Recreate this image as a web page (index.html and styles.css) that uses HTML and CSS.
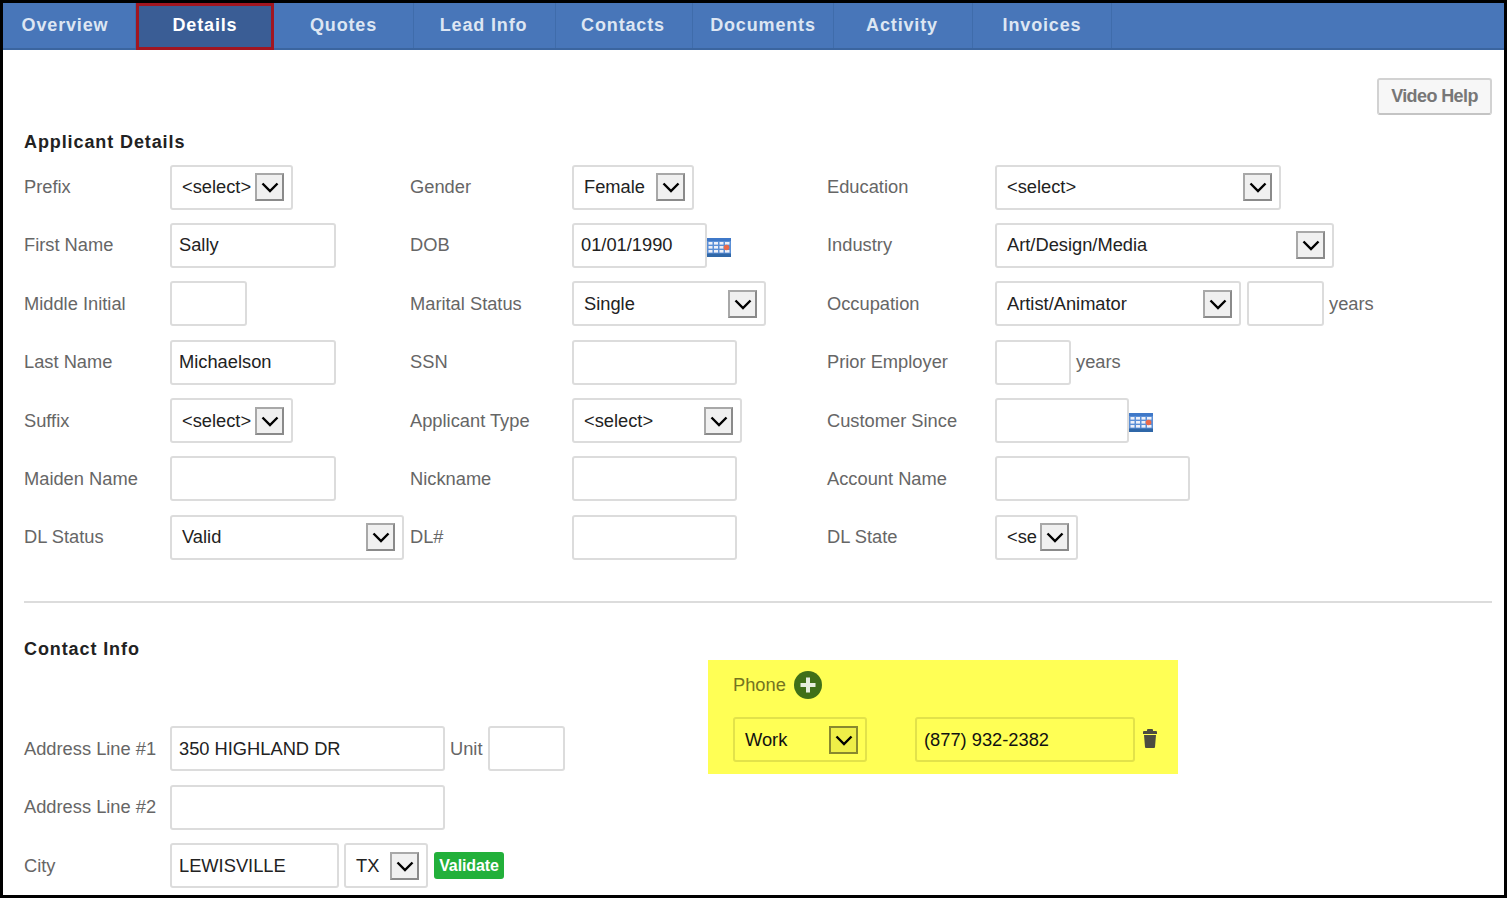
FILE: index.html
```html
<!doctype html>
<html>
<head>
    <title>Lead Details</title>
    <meta name="viewport" content="width=device-width, initial-scale=1.0">
    <link rel="stylesheet" href="styles.css">
</head>
<body>
    <svg class="defs" width="0" height="0">
        <symbol id="chev" viewBox="0 0 18 18"><path d="M1.5 5.5l7.5 7.5 7.5-7.5" fill="none" stroke="#000" stroke-width="2.4"/></symbol>
        <symbol id="cal" viewBox="0 0 24 19">
            <rect width="24" height="19" fill="#5b8fd6"/>
            <rect width="24" height="3" fill="#3f78c8"/>
            <rect y="15.5" width="24" height="3.5" fill="#2f67a8"/>
            <g fill="#eef0f8">
                <rect x="1.5" y="4" width="4" height="2.6"/><rect x="7" y="4" width="4" height="2.6"/><rect x="12.5" y="4" width="4" height="2.6"/><rect x="18" y="4" width="4.5" height="2.6"/>
                <rect x="1.5" y="8" width="4" height="2.6"/><rect x="7" y="8" width="4" height="2.6"/><rect x="12.5" y="8" width="4" height="2.6"/>
                <rect x="1.5" y="12" width="4" height="2.6"/><rect x="7" y="12" width="4" height="2.6"/><rect x="12.5" y="12" width="4" height="2.6"/><rect x="18" y="12" width="4.5" height="2.6"/>
            </g>
            <circle cx="19.5" cy="9.5" r="2.8" fill="#ec6a4a"/>
        </symbol>
    </svg>

    <div class="frame">
        <nav class="tabs">
            <a class="tab tab-overview">Overview</a>
            <a class="tab tab-details active">Details</a>
            <a class="tab tab-quotes">Quotes</a>
            <a class="tab tab-lead">Lead Info</a>
            <a class="tab tab-contacts">Contacts</a>
            <a class="tab tab-documents">Documents</a>
            <a class="tab tab-activity">Activity</a>
            <a class="tab tab-invoices">Invoices</a>
        </nav>

        <div class="content">
            <div class="help-row"><button class="video-help">Video Help</button></div>

            <h3 class="section-title">Applicant Details</h3>
            <div class="details-grid">
                <label>Prefix</label>
                <div class="cell"><div class="select w123"><span>&lt;select&gt;</span><i class="arrow"><svg><use href="#chev"/></svg></i></div></div>
                <label>Gender</label>
                <div class="cell"><div class="select w122"><span>Female</span><i class="arrow"><svg><use href="#chev"/></svg></i></div></div>
                <label>Education</label>
                <div class="cell"><div class="select w286"><span>&lt;select&gt;</span><i class="arrow"><svg><use href="#chev"/></svg></i></div></div>

                <label>First Name</label>
                <div class="cell"><input class="w166" type="text" value="Sally"></div>
                <label>DOB</label>
                <div class="cell"><input class="w135" type="text" value="01/01/1990"><svg class="cal"><use href="#cal"/></svg></div>
                <label>Industry</label>
                <div class="cell"><div class="select w339"><span>Art/Design/Media</span><i class="arrow"><svg><use href="#chev"/></svg></i></div></div>

                <label>Middle Initial</label>
                <div class="cell"><input class="w77" type="text"></div>
                <label>Marital Status</label>
                <div class="cell"><div class="select w194"><span>Single</span><i class="arrow"><svg><use href="#chev"/></svg></i></div></div>
                <label>Occupation</label>
                <div class="cell"><div class="select w246"><span>Artist/Animator</span><i class="arrow"><svg><use href="#chev"/></svg></i></div><input class="w77 next" type="text"><label class="unit">years</label></div>

                <label>Last Name</label>
                <div class="cell"><input class="w166" type="text" value="Michaelson"></div>
                <label>SSN</label>
                <div class="cell"><input class="w165" type="text"></div>
                <label>Prior Employer</label>
                <div class="cell"><input class="w76" type="text"><label class="unit">years</label></div>

                <label>Suffix</label>
                <div class="cell"><div class="select w123"><span>&lt;select&gt;</span><i class="arrow"><svg><use href="#chev"/></svg></i></div></div>
                <label>Applicant Type</label>
                <div class="cell"><div class="select w170"><span>&lt;select&gt;</span><i class="arrow"><svg><use href="#chev"/></svg></i></div></div>
                <label>Customer Since</label>
                <div class="cell"><input class="w134" type="text"><svg class="cal"><use href="#cal"/></svg></div>

                <label>Maiden Name</label>
                <div class="cell"><input class="w166" type="text"></div>
                <label>Nickname</label>
                <div class="cell"><input class="w165" type="text"></div>
                <label>Account Name</label>
                <div class="cell"><input class="w195" type="text"></div>

                <label>DL Status</label>
                <div class="cell"><div class="select w234"><span>Valid</span><i class="arrow"><svg><use href="#chev"/></svg></i></div></div>
                <label>DL#</label>
                <div class="cell"><input class="w165" type="text"></div>
                <label>DL State</label>
                <div class="cell"><div class="select w83"><span>&lt;se</span><i class="arrow"><svg><use href="#chev"/></svg></i></div></div>
            </div>

            <hr class="divider">

            <div class="contact">
                <div class="contact-left">
                    <h3 class="section-title">Contact Info</h3>
                    <div class="address-rows">
                        <div class="address-row">
                            <label>Address Line #1</label>
                            <input class="w275" type="text" value="350 HIGHLAND DR">
                            <label class="unit">Unit</label>
                            <input class="w77 unit-input" type="text">
                        </div>
                        <div class="address-row">
                            <label>Address Line #2</label>
                            <input class="w275" type="text">
                        </div>
                        <div class="address-row">
                            <label>City</label>
                            <input class="w169" type="text" value="LEWISVILLE">
                            <div class="select w84 state"><span>TX</span><i class="arrow"><svg><use href="#chev"/></svg></i></div>
                            <button class="validate">Validate</button>
                        </div>
                    </div>
                </div>

                <div class="phone-panel">
                    <div class="phone-head">
                        <label>Phone</label>
                        <svg class="add" viewBox="0 0 28 28"><circle cx="14" cy="14" r="14" fill="#3f7018"/><path d="M14 6.5v15M6.5 14h15" stroke="#e6eedd" stroke-width="4"/></svg>
                    </div>
                    <div class="phone-row">
                        <div class="select w134"><span>Work</span><i class="arrow"><svg><use href="#chev"/></svg></i></div>
                        <input class="w220" type="text" value="(877) 932-2382">
                        <svg class="trash" viewBox="0 0 14 19"><path d="M5 0h4q1 0 1 1v1h3q1 0 1 1v2H0V3q0-1 1-1h3V1q0-1 1-1zM1 6h12l-1 12q0 1-1 1H3q-1 0-1-1z" fill="#4c4c40"/></svg>
                    </div>
                </div>
            </div>
        </div>
    </div>
</body>
</html>
```

FILE: styles.css
```css
html, body {
    margin: 0;
    height: 100%;
    background-color: #fff;
}
body {
    font-family: "Liberation Sans", Arial, sans-serif;
    font-size: 18.3px;
    color: #666;
    overflow: hidden;
}
.defs {
    display: block;
    height: 0;
}
.frame {
    box-sizing: border-box;
    height: 898px;
    border: 3px solid #000;
    overflow: hidden;
    background-color: #fff;
}

/* tabs */
.tabs {
    display: flex;
    height: 47px;
    box-sizing: border-box;
    font-size: 18px;
    background-color: #4876b9;
    border-bottom: 2px solid #3b659f;
}
.tab {
    box-sizing: border-box;
    display: flex;
    align-items: center;
    justify-content: center;
    font-weight: bold;
    letter-spacing: 0.85px;
    color: #dde6f3;
    border-right: 1px solid #3f6cab;
}
.tab-overview { width: 133px; padding-right: 8px; }
.tab-details { width: 138px; }
.tab-quotes { width: 140px; }
.tab-lead { width: 142px; padding-right: 2px; }
.tab-contacts { width: 137px; padding-right: 2px; }
.tab-documents { width: 141px; }
.tab-activity { width: 139px; padding-right: 2px; }
.tab-invoices { width: 139px; }
.tab.active {
    height: 47px;
    margin-bottom: -2px;
    padding-bottom: 2px;
    color: #fff;
    background-color: #3a5d95;
    border: 3px solid #a11621;
}

.content {
    padding: 0 12px 0 21px;
}
.help-row {
    display: flex;
    justify-content: flex-end;
    padding-top: 28px;
}
.video-help {
    width: 115px;
    height: 37px;
    padding: 0;
    font-family: inherit;
    font-size: 18px;
    font-weight: bold;
    letter-spacing: -0.6px;
    color: #777;
    background-color: #f7f7f7;
    border: 2px solid #d2d2d2;
    border-bottom-color: #c4c4c4;
    border-radius: 3px;
}
.section-title {
    margin: 0;
    font-size: 18px;
    line-height: 22px;
    font-weight: bold;
    letter-spacing: 0.9px;
    color: #222;
}
.content > .section-title {
    margin-top: 16px;
}

/* applicant grid */
.details-grid {
    display: grid;
    grid-template-columns: 146px 240px 162px 255px 168px 1fr;
    grid-auto-rows: 45px;
    row-gap: 13.4px;
    align-items: center;
    margin-top: 11.5px;
}
.cell {
    display: flex;
    align-items: center;
}
label {
    white-space: nowrap;
    color: #666;
}
input, .select {
    box-sizing: border-box;
    height: 45px;
    font-family: inherit;
    font-size: 18.3px;
    color: #222;
    background-color: transparent;
    border: 2px solid #dcdcdc;
    border-radius: 3px;
}
input {
    padding: 0 7px;
}
.select {
    display: flex;
    align-items: center;
    justify-content: space-between;
    flex: none;
    padding: 0 7px 0 10px;
}
.arrow {
    box-sizing: border-box;
    display: flex;
    align-items: center;
    justify-content: center;
    width: 29px;
    height: 28px;
    background-color: #f0f0f0;
    border: 2px solid #8a8a8a;
    border-top-color: #a8a8a8;
    border-left-color: #a8a8a8;
}
.arrow svg {
    width: 18px;
    height: 18px;
}
.cal {
    width: 24px;
    height: 19px;
    margin-top: 4px;
}
.next {
    margin-left: 6px;
}
.unit {
    margin-left: 5px;
}

.w76 { width: 76px; }
.w77 { width: 77px; }
.w83 { width: 83px; }
.w84 { width: 84px; }
.w122 { width: 122px; }
.w123 { width: 123px; }
.w134 { width: 134px; }
.w135 { width: 135px; }
.w165 { width: 165px; }
.w166 { width: 166px; }
.w169 { width: 169px; }
.w170 { width: 170px; }
.w194 { width: 194px; }
.w195 { width: 195px; }
.w220 { width: 220px; }
.w234 { width: 234px; }
.w246 { width: 246px; }
.w275 { width: 275px; }
.w286 { width: 286px; }
.w339 { width: 339px; }

.divider {
    height: 0;
    margin: 41.5px 0 0;
    border: 0;
    border-top: 2px solid #dcdcdc;
}

/* contact info */
.contact {
    display: flex;
    align-items: flex-start;
}
.contact-left {
    width: 684px;
    padding-top: 35px;
}
.address-rows {
    display: flex;
    flex-direction: column;
    gap: 13.5px;
    margin-top: 66px;
}
.address-row {
    display: flex;
    align-items: center;
}
.address-row > label:first-child {
    width: 146px;
}
.unit-input {
    margin-left: 5px;
}
.state {
    margin-left: 5px;
}
.validate {
    width: 70px;
    height: 27px;
    margin-left: 6px;
    padding: 1px 0 0;
    font-family: inherit;
    font-size: 16px;
    font-weight: bold;
    letter-spacing: -0.1px;
    color: #fff;
    background-color: #22b03a;
    border: 0;
    border-radius: 3px;
}
.phone-panel {
    box-sizing: border-box;
    width: 470px;
    height: 114px;
    margin-top: 57px;
    padding: 11px 0 0 25px;
    background-color: #ffff55;
}
.phone-head {
    display: flex;
    align-items: center;
    gap: 8px;
}
.phone-head label {
    color: #74741f;
}
.add {
    width: 28px;
    height: 28px;
}
.phone-row {
    display: flex;
    align-items: center;
    margin-top: 18px;
}
.phone-row input, .phone-row .select {
    color: #111;
    border-color: #e2e24a;
}
.phone-row .arrow {
    background-color: #eeee48;
    border-color: #88882e;
}
.phone-row input {
    margin-left: 48px;
}
.trash {
    flex: none;
    width: 14px;
    height: 19px;
    margin: -2px 0 0 8px;
}
```
